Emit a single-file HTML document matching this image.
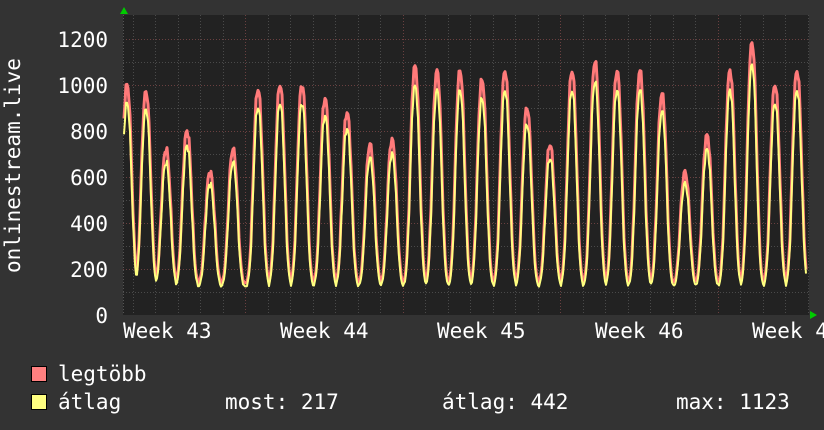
<!DOCTYPE html>
<html><head><meta charset="utf-8"><style>
html,body{margin:0;padding:0;background:#333;width:824px;height:430px;overflow:hidden}
svg{display:block}
text{font-family:"DejaVu Sans Mono","Liberation Mono",monospace;fill:#fff;font-size:21px}
</style></head><body>
<svg id="g" width="824" height="430" xmlns="http://www.w3.org/2000/svg">
<rect x="0" y="0" width="824" height="430" fill="#333"/>
<rect x="123" y="15" width="686" height="300" fill="#222"/>
<g id="grid"></g>
<polyline id="red" fill="none" stroke="#ff7a7a" stroke-width="3" stroke-linejoin="round"/>
<polyline id="yel" fill="none" stroke="#ffff80" stroke-width="2" stroke-linejoin="round"/>
<polygon points="120,14 128,14 124,7" fill="#0c0"/>
<polygon points="810,311 810,319 817,315" fill="#0c0"/>
<g text-anchor="end">
<text x="108" y="47">1200</text>
<text x="108" y="93">1000</text>
<text x="108" y="139">800</text>
<text x="108" y="185">600</text>
<text x="108" y="231">400</text>
<text x="108" y="277">200</text>
<text x="108" y="323">0</text>
</g>
<text transform="translate(20,273) rotate(-90)">onlinestream.live</text>
<text x="123" y="338">Week 43</text>
<text x="280" y="338">Week 44</text>
<text x="437" y="338">Week 45</text>
<text x="595" y="338">Week 46</text>
<text x="752" y="338">Week 47</text>
<rect x="31.5" y="366.5" width="15" height="15" fill="#ff8080" stroke="#000"/>
<rect x="31.5" y="394.5" width="15" height="15" fill="#ffff80" stroke="#000"/>
<text x="58" y="381">legtöbb</text>
<text x="58" y="409">átlag</text>
<text x="225" y="409">most: 217</text>
<text x="442" y="409">átlag: 442</text>
<text x="676" y="409">max: 1123</text>
</svg>
<script>
var NS="http://www.w3.org/2000/svg",g=document.getElementById("grid");
function ln(x1,y1,x2,y2,c){var l=document.createElementNS(NS,"line");l.setAttribute("x1",x1);l.setAttribute("y1",y1);l.setAttribute("x2",x2);l.setAttribute("y2",y2);l.setAttribute("stroke",c);l.setAttribute("stroke-dasharray","1,2");g.appendChild(l);}
for(var v=100;v<=1200;v+=100){var y=315-v*0.23+0.5;ln(123,y,809,y,v%200==0?"#6a4040":"#4a4a4a");}
for(var x=132.5;x<809;x+=22.5){var k=Math.round((x-245)/22.5);ln(Math.round(x)+0.5,15,Math.round(x)+0.5,315,(k%7==0)?"#6a4040":"#4a4a4a");}
ln(123.5,15,123.5,315,"#555");
var peaks=[[127,1000],[146,970],[166,720],[187,800],[210,620],[233,720],[258,980],[280,1000],[302,1000],[325,940],[347,880],[370,740],[392,760],[415,1080],[437,1060],[460,1060],[482,1020],[505,1060],[527,900],[550,740],[572,1060],[595,1100],[617,1060],[640,1060],[662,960],[685,620],[707,780],[730,1060],[752,1180],[775,1000],[797,1060]];
function val(x,avg){var best=0;for(var i=0;i<peaks.length;i++){var d=Math.abs(x-peaks[i][0])/6;var f=Math.exp(-Math.pow(d,2.4));var p=peaks[i][1]*(avg?0.92:1);var lo=avg?120:135;var v=lo+(p-lo)*f;if(v>best)best=v;}var n=Math.sin(x*1.7)*12+Math.sin(x*3.1)*8;return best+n*(best>300?1:0.3);}
var r=[],yl=[];for(var x=124;x<=806;x+=1){r.push(x+","+(315-val(x,0)*0.23).toFixed(1));yl.push(x+","+(315-val(x,1)*0.23).toFixed(1));}
document.getElementById("red").setAttribute("points",r.join(" "));
document.getElementById("yel").setAttribute("points",yl.join(" "));
</script>
</body></html>
